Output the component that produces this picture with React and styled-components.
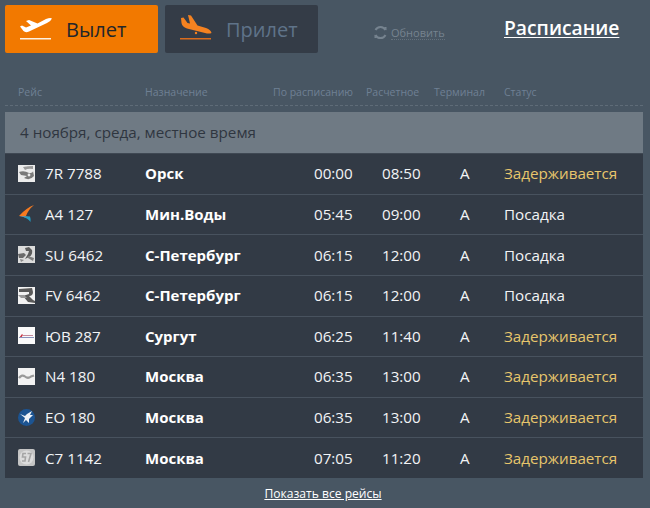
import styled, { createGlobalStyle } from 'styled-components';

const GlobalStyle = createGlobalStyle`
  html, body {
    margin: 0;
    height: 100%;
    background: #485663;
    font-family: "Open Sans", "Noto Sans", sans-serif;
  }
`

const Root = styled.div`
  width: 650px;
  height: 508px;
  padding: 5px 7px 0 5px;
  box-sizing: border-box;
  overflow: hidden;
`

const Toolbar = styled.div`
  display: flex;
  align-items: flex-start;
  height: 48px;
`

const Tab = styled.div`
  width: 153px;
  height: 48px;
  box-sizing: border-box;
  margin-right: 7px;
  padding-left: 15px;
  display: flex;
  align-items: center;
  border-radius: 2px;
  font-size: 20px;
  background: ${(p) => (p.$active ? '#f27900' : '#343c47')};
  color: ${(p) => (p.$active ? '#22262b' : '#5f7389')};
`

const TabLabel = styled.span`
  margin-left: 14px;
`

const Refresh = styled.div`
  margin: 20px 0 0 48px;
  display: flex;
  align-items: center;
  gap: 3px;
  width: 131px;
  font-size: 11px;
  color: #76838f;
`

const RefreshLabel = styled.span`
  border-bottom: 1px dotted #64717d;
  line-height: 13px;
`

const Title = styled.a`
  margin-top: 9px;
  font-size: 19.3px;
  font-weight: 600;
  color: #fff;
  text-decoration: underline;
  text-underline-offset: 2px;
`

const Columns = styled.div`
  display: grid;
  grid-template-columns: 127px 128px 93px 68px 70px 1fr;
  padding-left: 13px;
  align-items: center;
`

const HeadRow = styled(Columns)`
  height: 23px;
  margin-top: 27px;
  padding-bottom: 2px;
  border-bottom: 1px dashed #5f6c78;
  font-size: 10.5px;
  color: #6f8094;
`

const DateBar = styled.div`
  margin-top: 6px;
  height: 40px;
  padding: 0 0 1px 15px;
  display: flex;
  align-items: center;
  background: #6f7a84;
  color: #2f3640;
  font-size: 15.2px;
`

const Board = styled.div`
  display: grid;
  grid-template-rows: repeat(8, 1fr);
  height: 325px;
  background: #323a45;
`

const Row = styled(Columns)`
  border-top: 1px solid #48525e;
  padding-bottom: 1px;
  color: #f2f4f6;
  font-size: 15.2px;
  &:first-child {
    border-top-color: #3f4853;
  }
`

const FlightCell = styled.div`
  display: flex;
  align-items: center;
  gap: 10px;
`

const Destination = styled.div`
  font-size: 15px;
  font-weight: 700;
  color: #fff;
`

const Cell = styled.div`
  padding-left: ${(p) => p.$indent}px;
`

const Status = styled.div`
  color: ${(p) => (p.$late ? '#e8c66c' : '#f2f4f6')};
`

const LogoBox = styled.svg`
  width: 17px;
  height: 17px;
  flex: none;
`

const Footer = styled.div`
  height: 30px;
  padding-top: 7px;
  box-sizing: border-box;
  text-align: center;
  font-size: 12.1px;
  margin-right: 2px;
`

const FooterLink = styled.a`
  color: #fff;
  text-decoration: underline;
`

function TakeoffIcon() {
  return (
    <svg width="32" height="26" viewBox="0 0 32 26">
      <path fill="#fff" d="M0 10.5 L2 9.5 L6 11.5 L11 9.5 L6 5 L9 4 L17.5 7.5 L26 3 Q30.5 1.5 32 2.5 Q31 5 27 7 L9 15.5 Q5.5 17 3.5 15 Z" />
      <rect x="0" y="22" width="31" height="1.5" fill="#fdf1df" />
    </svg>
  )
}

function LandingIcon() {
  return (
    <svg width="32" height="26" viewBox="0 0 32 26" style={{ overflow: 'visible' }}>
      <path fill="#f58220" d="M1 2 L3.5 1.5 L7.5 7 L10 7.5 L8 -1 L11 -.5 L17.5 9.5 L26 12 Q31 14 31.5 17 Q29 18 25 17 L7 12.5 Q2 10.5 1.5 7 Z" />
      <circle cx="16" cy="17" r="1.2" fill="#f58220" />
      <rect x="0" y="22" width="31" height="1.5" fill="#d96c1e" />
    </svg>
  )
}

function RefreshIcon() {
  return (
    <svg width="15" height="15" viewBox="0 0 15 15" fill="none" stroke="#76838f" strokeWidth="2">
      <path d="M2.5 5 A5.6 5.6 0 0 1 12.5 5" />
      <path d="M12.5 10 A5.6 5.6 0 0 1 2.5 10" />
      <path d="M11 2 L13.5 2 L13.5 5.5 Z" fill="#76838f" stroke="none" />
      <path d="M4 13 L1.5 13 L1.5 9.5 Z" fill="#76838f" stroke="none" />
    </svg>
  )
}

const logos = {
  orsk: (
    <LogoBox viewBox="0 0 17 17">
      <rect width="17" height="17" fill="#ececec" />
      <path d="M5 2 Q10 1 15 1 L15 4 Q10 3 7 5 Z" fill="#9a9a9a" />
      <path d="M1 7 Q6 5 11 8 Q15 8 15 6 L16 11 Q12 16 6 13 L9 11 L3 10 Z" fill="#7a7a7a" />
      <circle cx="11" cy="10" r="1.4" fill="#ececec" />
    </LogoBox>
  ),
  sibir: (
    <LogoBox viewBox="0 0 17 17">
      <path d="M16 0 Q8 3 1 11 L8 11 Q10 5 16 0 Z" fill="#f47a20" />
      <path d="M1 11 L12 12 L8 12.5 Z" fill="#e8e8e8" />
      <path d="M4 11.5 L12 11.5 Q13 14 12.5 17 Q10 13 4 11.5 Z" fill="#1f9bc4" />
    </LogoBox>
  ),
  aeroflot: (
    <LogoBox viewBox="0 0 17 17">
      <rect width="17" height="17" fill="#dcdcdc" />
      <path d="M0 8 L6 7 L8 9 L5 12 L1 12 Z" fill="#6a6a6a" />
      <path d="M7 2 L11 1 L14 4 Q15 9 11 11 L7 13 L10 8 L11 5 L8 5 Z" fill="#5c5c5c" />
      <path d="M10 10 L16 12 L15 15 L10 12 Z" fill="#7d7d7d" />
      <path d="M2 13 L6 14 L3 16 Z" fill="#8a8a8a" />
    </LogoBox>
  ),
  rossiya: (
    <LogoBox viewBox="0 0 17 17">
      <rect width="17" height="17" fill="#f2f2f2" />
      <path d="M1 2 L14 1 L15 5 Q15 9 11 9 L15 13 L17 14 L17 16 L10 15 L5 9 L11 7 L11 5 L1 5 Z" fill="#5a5a5a" />
      <path d="M0 8 L6 8 L9 11 L3 11 Z" fill="#999" />
    </LogoBox>
  ),
  yuvt: (
    <LogoBox viewBox="0 0 17 17">
      <rect width="17" height="17" fill="#fafafa" />
      <path d="M1 11 L4 7 L5 8 L3 11 Z" fill="#c8303f" />
      <rect x="5" y="8" width="10" height="1" fill="#c58a9c" />
      <rect x="1" y="10" width="15" height="1" fill="#8a94bd" />
    </LogoBox>
  ),
  nordwind: (
    <LogoBox viewBox="0 0 17 17">
      <rect width="17" height="17" fill="#f2f2f2" />
      <path d="M1 10 Q4 6 7 8.5 Q10 11 13 8.5 L16 7.5" fill="none" stroke="#999" strokeWidth="2.2" />
    </LogoBox>
  ),
  ikar: (
    <LogoBox viewBox="0 0 17 17">
      <circle cx="8.5" cy="8.5" r="8.5" fill="#1c5492" />
      <path d="M2 5 L7 7 L9 5 L14 2 L12 6 L15 6 L11 10 L11 14 L8 11 L5 14 L7 9 Z" fill="#eef2f7" />
    </LogoBox>
  ),
  s7: (
    <LogoBox viewBox="0 0 17 17">
      <rect width="17" height="17" rx="2" fill="#c4c4c4" />
      <circle cx="8.5" cy="8.5" r="7" fill="#dcdcdc" />
      <path d="M8 4.5 L5 4.5 L4.5 8 L7.5 8 L7 12 L4 12 M9.5 4.5 L13 4.5 L10.5 13" fill="none" stroke="#a5a5a5" strokeWidth="1.6" />
    </LogoBox>
  ),
}

const flights = [
  { logo: 'orsk', code: '7R 7788', dest: 'Орск', plan: '00:00', est: '08:50', status: 'Задерживается', late: true },
  { logo: 'sibir', code: 'A4 127', dest: 'Мин.Воды', plan: '05:45', est: '09:00', status: 'Посадка' },
  { logo: 'aeroflot', code: 'SU 6462', dest: 'С-Петербург', plan: '06:15', est: '12:00', status: 'Посадка' },
  { logo: 'rossiya', code: 'FV 6462', dest: 'С-Петербург', plan: '06:15', est: '12:00', status: 'Посадка' },
  { logo: 'yuvt', code: 'ЮВ 287', dest: 'Сургут', plan: '06:25', est: '11:40', status: 'Задерживается', late: true },
  { logo: 'nordwind', code: 'N4 180', dest: 'Москва', plan: '06:35', est: '13:00', status: 'Задерживается', late: true },
  { logo: 'ikar', code: 'EO 180', dest: 'Москва', plan: '06:35', est: '13:00', status: 'Задерживается', late: true },
  { logo: 's7', code: 'C7 1142', dest: 'Москва', plan: '07:05', est: '11:20', status: 'Задерживается', late: true },
]

function App() {
  return (
    <Root>
      <GlobalStyle />
      <Toolbar>
        <Tab $active>
          <TakeoffIcon />
          <TabLabel>Вылет</TabLabel>
        </Tab>
        <Tab>
          <LandingIcon />
          <TabLabel>Прилет</TabLabel>
        </Tab>
        <Refresh>
          <RefreshIcon />
          <RefreshLabel>Обновить</RefreshLabel>
        </Refresh>
        <Title>Расписание</Title>
      </Toolbar>
      <HeadRow>
        <div>Рейс</div>
        <div>Назначение</div>
        <div>По расписанию</div>
        <div>Расчетное</div>
        <div>Терминал</div>
        <div>Статус</div>
      </HeadRow>
      <DateBar>4 ноября, среда, местное время</DateBar>
      <Board>
        {flights.map((f) => (
          <Row key={f.code}>
            <FlightCell>
              {logos[f.logo]}
              <span>{f.code}</span>
            </FlightCell>
            <Destination>{f.dest}</Destination>
            <Cell $indent={41}>{f.plan}</Cell>
            <Cell $indent={16}>{f.est}</Cell>
            <Cell $indent={26}>A</Cell>
            <Status $late={f.late}>{f.status}</Status>
          </Row>
        ))}
      </Board>
      <Footer>
        <FooterLink>Показать все рейсы</FooterLink>
      </Footer>
    </Root>
  );
}

export default App;
